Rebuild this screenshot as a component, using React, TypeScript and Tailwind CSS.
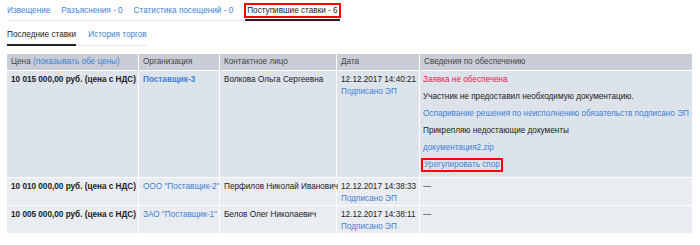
import React from 'react';

const mainTabs = [
  { label: 'Извещение' },
  { label: 'Разъяснения - 0' },
  { label: 'Статистика посещений - 0' },
];

const rows = [
  {
    price: '10 010 000,00 руб. (цена с НДС)',
    org: 'ООО "Поставщик-2"',
    person: 'Перфилов Николай Иванович',
    date: '12.12.2017 14:38:33',
  },
  {
    price: '10 005 000,00 руб. (цена с НДС)',
    org: 'ЗАО "Поставщик-1"',
    person: 'Белов Олег Николаевич',
    date: '12.12.2017 14:38:11',
  },
];

const link = 'text-[#3f7fd6]';

export default function App() {
  return (
    <div
      className="w-[700px] h-[245px] bg-white text-[8.2px] leading-[12px] text-[#222] whitespace-nowrap"
      style={{ fontFamily: '"Liberation Sans", Arial, sans-serif' }}
    >
      <div className="pl-[7px] pt-[3px]">
        {/* main tabs */}
        <div className="flex w-fit items-start border-b border-[#e4e6ea]">
          {mainTabs.map((t, i) => (
            <span key={i} className={`${link} mr-[11px] mt-[2px] mb-[2px]`}>
              {t.label}
            </span>
          ))}
          <div className="flex flex-col">
            <span className="border-2 border-[#ff0000] px-[1px] leading-[11px] text-[#222]">
              Поступившие ставки - 6
            </span>
            <div className="h-[2px] mx-[1px] mt-[1px] -mb-[1px] bg-[#222]" />
          </div>
        </div>

        {/* sub tabs */}
        <div className="flex w-fit mt-[8px] border-b border-[#e4e6ea]">
          <div className="flex flex-col mr-[12px]">
            <span className="pb-[3px]">Последние ставки</span>
            <div className="h-[2px] bg-[#222] -mb-[1px]" />
          </div>
          <span className={link}>История торгов</span>
        </div>

        {/* table */}
        <table className="mt-[7px] w-[687px] -ml-[1px] border-separate border-spacing-[1px] table-fixed">
          <colgroup>
            <col className="w-[131px]" />
            <col className="w-[80px]" />
            <col className="w-[116px]" />
            <col className="w-[82px]" />
            <col />
          </colgroup>
          <thead>
            <tr className="bg-[#c9ced6] text-[#444] text-left">
              <th className="font-normal px-[4px] py-[2px] h-[15px]">
                Цена <span className={link}>(показывать обе цены)</span>
              </th>
              <th className="font-normal px-[4px] py-[2px]">Организация</th>
              <th className="font-normal px-[4px] py-[2px]">Контактное лицо</th>
              <th className="font-normal px-[4px] py-[2px]">Дата</th>
              <th className="font-normal px-[4px] py-[2px]">Сведения по обеспечению</th>
            </tr>
          </thead>
          <tbody>
            <tr className="bg-[#dde3eb] align-top">
              <td className="px-[4px] pt-[3px] font-bold">10 015 000,00 руб. (цена с НДС)</td>
              <td className={`px-[4px] pt-[3px] font-bold ${link}`}>Поставщик-3</td>
              <td className="px-[4px] pt-[3px]">Волкова Ольга Сергеевна</td>
              <td className="px-[4px] pt-[3px]">
                <div>12.12.2017 14:40:21</div>
                <div className={link}>Подписано ЭП</div>
              </td>
              <td className="px-[3px] pt-[3px] pb-[5px]">
                <div className="flex flex-col items-start gap-[5px]">
                  <span className="text-[#e8204f]">Заявка не обеспечена</span>
                  <span>Участник не предоставил необходимую документацию.</span>
                  <span className={link}>
                    Оспаривание решения по неисполнению обязательств подписано ЭП
                  </span>
                  <span>Прикрепляю недостающие документы</span>
                  <span className={link}>документация2.zip</span>
                  <span className={`${link} border-2 border-[#ff0000] -ml-[2px] -mt-[1px] leading-[10px] px-[1px]`}>
                    Урегулировать спор
                  </span>
                </div>
              </td>
            </tr>
            {rows.map((r, i) => (
              <tr key={i} className="bg-[#e9ecf0] align-top">
                <td className="px-[4px] pt-[3px] pb-[2px] font-bold">{r.price}</td>
                <td className={`px-[4px] pt-[3px] ${link}`}>{r.org}</td>
                <td className="px-[4px] pt-[3px]">{r.person}</td>
                <td className="px-[4px] pt-[3px]">
                  <div>{r.date}</div>
                  <div className={link}>Подписано ЭП</div>
                </td>
                <td className="px-[3px] pt-[3px]">—</td>
              </tr>
            ))}
          </tbody>
        </table>
      </div>
    </div>
  );
}
